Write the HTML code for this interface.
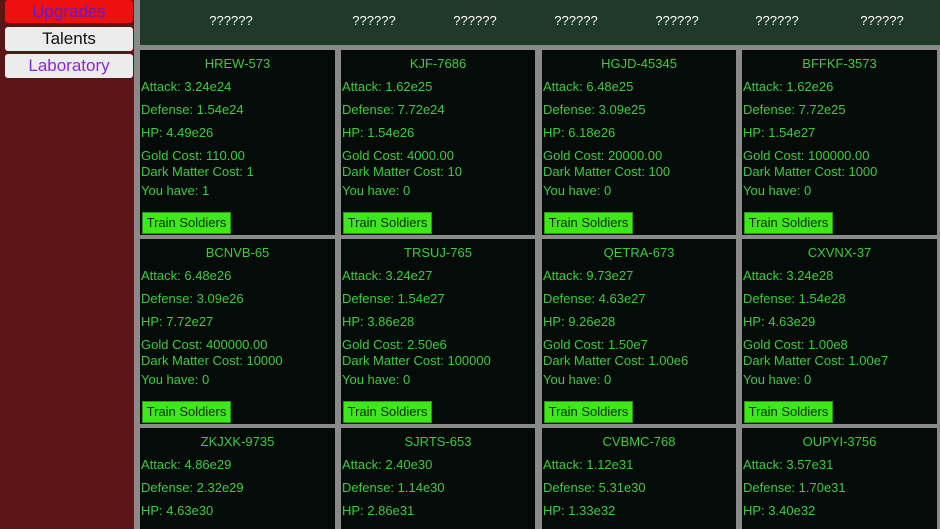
<!DOCTYPE html><html style="width:940px;height:529px;overflow:hidden"><head><style>
*{margin:0;padding:0;box-sizing:border-box}
body{width:940px;height:529px;overflow:hidden;background:#8a8a8a;font-family:"Liberation Sans",sans-serif;position:relative}
#side{position:absolute;left:0;top:0;width:134px;height:529px;background:#5c1516}
.sb{position:absolute;left:5px;width:128px;height:24px;border-radius:3px;text-align:center;font-size:17px;line-height:24px}
#hdr{position:absolute;left:140px;top:0;width:800px;height:45px;background:#203a29}
.q{position:absolute;top:13px;color:#fff;font-size:13px;transform:translateX(-50%)}
#cards{position:absolute;left:0;top:0;width:940px;height:529px;overflow:hidden}
.c{position:absolute;background:#050b09;color:#3ccb3c;font-size:13px;overflow:hidden}
.c div{position:absolute;left:1px;white-space:nowrap}
.c .n{left:0;right:0;text-align:center}
.c .b{left:2px;width:89px;height:22px;background:#3fe81a;color:#0c2a0c;border:1px solid #2a9a10;line-height:20px;text-align:center;font-size:13px}
</style></head><body>
<div id="side">
<div class="sb" style="top:0;background:#ee0f0f;color:#6a18c8;height:23px">Upgrades</div>
<div class="sb" style="top:27px;background:#ececec;color:#111">Talents</div>
<div class="sb" style="top:54px;background:#ececec;color:#8a2ad0">Laboratory</div>
</div>
<div id="hdr">
<span class="q" style="left:91px">??????</span>
<span class="q" style="left:234px">??????</span>
<span class="q" style="left:335px">??????</span>
<span class="q" style="left:436px">??????</span>
<span class="q" style="left:537px">??????</span>
<span class="q" style="left:637px">??????</span>
<span class="q" style="left:742px">??????</span>
</div>
<div id="cards"></div>
<script>
var d=[
["HREW-573","3.24e24","1.54e24","4.49e26","110.00","1","1"],
["KJF-7686","1.62e25","7.72e24","1.54e26","4000.00","10","0"],
["HGJD-45345","6.48e25","3.09e25","6.18e26","20000.00","100","0"],
["BFFKF-3573","1.62e26","7.72e25","1.54e27","100000.00","1000","0"],
["BCNVB-65","6.48e26","3.09e26","7.72e27","400000.00","10000","0"],
["TRSUJ-765","3.24e27","1.54e27","3.86e28","2.50e6","100000","0"],
["QETRA-673","9.73e27","4.63e27","9.26e28","1.50e7","1.00e6","0"],
["CXVNX-37","3.24e28","1.54e28","4.63e29","1.00e8","1.00e7","0"],
["ZKJXK-9735","4.86e29","2.32e29","4.63e30","5.00e8","1.00e8","0"],
["SJRTS-653","2.40e30","1.14e30","2.86e31","2.50e9","1.00e9","0"],
["CVBMC-768","1.12e31","5.31e30","1.33e32","1.00e10","1.00e10","0"],
["OUPYI-3756","3.57e31","1.70e31","3.40e32","5.00e10","1.00e11","0"]];
var xs=[140,341,542,742],ws=[195,194,194,195],h="";
for(var i=0;i<12;i++){var r=Math.floor(i/4),c=i%4,t=50+r*189,e=d[i];
var hh=r==2?(529-t):185;
h+='<div class="c" style="left:'+xs[c]+'px;top:'+t+'px;width:'+ws[c]+'px;height:'+hh+'px">'+
'<div class="n" style="top:6px">'+e[0]+'</div>'+
'<div style="top:29px">Attack: '+e[1]+'</div>'+
'<div style="top:52px">Defense: '+e[2]+'</div>'+
'<div style="top:75px">HP: '+e[3]+'</div>';
if(r<2)h+='<div style="top:98px">Gold Cost: '+e[4]+'</div>'+
'<div style="top:114px">Dark Matter Cost: '+e[5]+'</div>'+
'<div style="top:133px">You have: '+e[6]+'</div>'+
'<div class="b" style="top:162px">Train Soldiers</div>';
h+='</div>';}
document.getElementById("cards").innerHTML=h;
</script>
</body></html>
